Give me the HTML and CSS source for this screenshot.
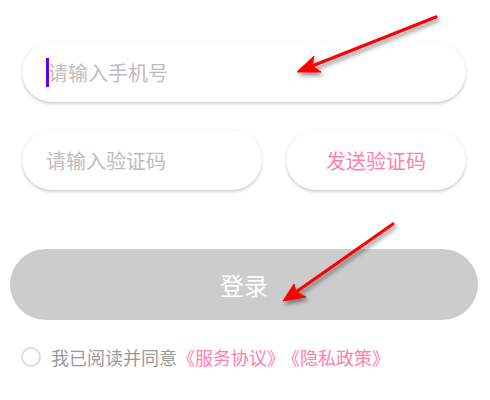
FILE: index.html
```html
<!DOCTYPE html>
<html>
<head>
    <meta charset="utf-8">
    <link rel="stylesheet" href="styles.css">
</head>
<body>
<div class="page">
    <div class="field field-phone">
        <span class="cursor"></span><span class="placeholder">请输入手机号</span>
    </div>

    <div class="code-row">
        <div class="field field-code">
            <span class="placeholder">请输入验证码</span>
        </div>
        <div class="field send-btn">发送验证码</div>
    </div>

    <div class="login-btn">登录</div>

    <div class="agree">
        <span class="radio"></span>
        <span class="agree-text">我已阅读并同意<span class="link">《服务协议》</span><span class="link link-next">《隐私政策》</span></span>
    </div>

    <!-- annotation arrows -->
    <svg class="arrows" width="490" height="400" viewBox="0 0 490 400">
        <defs>
            <filter id="shadow" x="-20%" y="-20%" width="140%" height="140%">
                <feDropShadow dx="2" dy="3" stdDeviation="2" flood-color="#000" flood-opacity="0.45"/>
            </filter>
        </defs>
        <g filter="url(#shadow)" fill="#ff0000" stroke="#ff0000">
            <line x1="436" y1="17" x2="312" y2="66" stroke-width="3.2" stroke-linecap="round"/>
            <polygon points="297,72 314,56 312,66 321,72" stroke-width="1" stroke-linejoin="round"/>
            <line x1="393" y1="224" x2="296" y2="292" stroke-width="3.2" stroke-linecap="round"/>
            <polygon points="283,301 294,284 296,292 306,297" stroke-width="1" stroke-linejoin="round"/>
        </g>
    </svg>
</div>
</body>
</html>
```

FILE: styles.css
```css
body {
    margin: 0;
    background: #ffffff;
    font-family: "Noto Sans CJK SC", "Noto Sans", sans-serif;
}
.page {
    position: relative;
    width: 490px;
    height: 400px;
    padding-top: 42px;
    box-sizing: border-box;
}
.field {
    height: 60px;
    border-radius: 30px;
    background: #ffffff;
    box-shadow: 0 2px 3px rgba(0, 0, 0, 0.18), 0 0 1px rgba(0, 0, 0, 0.12);
    display: flex;
    align-items: center;
    box-sizing: border-box;
    font-size: 20px;
}
.field-phone {
    margin: 0 24px 0 22px;
    padding-left: 24px;
}
.cursor {
    width: 3px;
    height: 29px;
    background: #6200ee;
    margin-right: -1px;
}
.placeholder {
    color: #bdbdbd;
}
.code-row {
    display: flex;
    gap: 24px;
    margin: 28px 24px 0 22px;
}
.field-code {
    flex: 0 0 240px;
    padding-left: 24px;
}
.send-btn {
    flex: 1;
    justify-content: center;
    color: #ff80ab;
}
.login-btn {
    height: 71px;
    margin: 59px 12px 0 10px;
    border-radius: 36px;
    background: #cccccc;
    color: #ffffff;
    font-size: 24px;
    display: flex;
    align-items: center;
    justify-content: center;
}
.agree {
    display: flex;
    align-items: center;
    gap: 10px;
    margin-top: 25px;
    padding-left: 21px;
    height: 24px;
}
.radio {
    width: 20px;
    height: 20px;
    border: 2px solid #dddddd;
    border-radius: 50%;
    box-sizing: border-box;
}
.agree-text {
    font-size: 18px;
    color: #999999;
}
.link {
    color: #ff80ab;
}
.link-next {
    margin-left: 6px;
}
.arrows {
    position: absolute;
    left: 0;
    top: 0;
    pointer-events: none;
}
```
